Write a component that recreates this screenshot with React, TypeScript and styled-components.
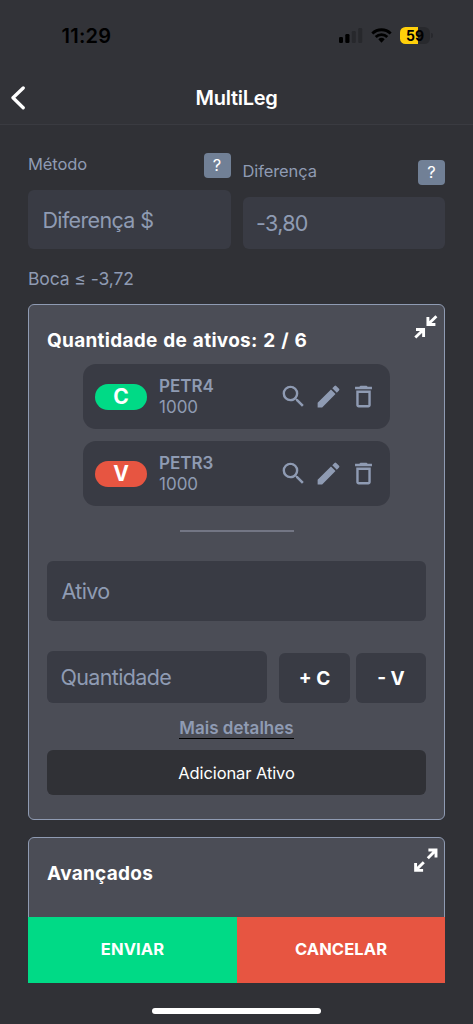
import React from "react";
import styled, { createGlobalStyle } from "styled-components";
import { MdDeleteOutline, MdEdit, MdSearch } from "react-icons/md";

const colors = {
  header: "#323338",
  page: "#303136",
  panel: "#4b4d56",
  field: "#393b44",
  muted: "#8f9bb3",
  green: "#00da86",
  red: "#e75541",
};

const GlobalStyle = createGlobalStyle`
  * { box-sizing: border-box; }
  body { margin: 0; background: ${colors.page}; }
  button { border: 0; margin: 0; padding: 0; font: inherit; color: inherit; background: none; }
`;

const Screen = styled.div`
  width: 473px;
  height: 1024px;
  overflow: hidden;
  display: flex;
  flex-direction: column;
  background: ${colors.page};
  font-family: Inter, "Liberation Sans", sans-serif;
  color: #fff;
`;

const StatusBar = styled.div`
  height: 71px;
  flex: none;
  display: flex;
  justify-content: space-between;
  padding: 23px 40px 0 61.5px;
  background: ${colors.header};
  color: #000;
`;

const Clock = styled.span`
  padding-top: 1px;
  font-size: 20px;
  line-height: 25px;
  font-weight: 600;
  letter-spacing: 0.25px;
`;

const StatusIcons = styled.div`
  display: flex;
  align-items: flex-start;
  gap: 8px;
  padding-top: 4px;
`;

const Battery = styled.div`
  display: flex;
  align-items: center;
  gap: 1px;
  &::after {
    content: "";
    width: 2px;
    height: 5px;
    border-radius: 0 2px 2px 0;
    background: #28292d;
  }
`;

const BatteryLevel = styled.div`
  width: 30px;
  height: 17px;
  border-radius: 5.5px;
  background: linear-gradient(90deg, #ffd00a 60%, #28292d 60%);
  font-size: 14px;
  line-height: 17px;
  font-weight: 700;
  text-align: center;
`;

const Header = styled.header`
  height: 54px;
  flex: none;
  display: grid;
  grid-template-columns: 60px 1fr 60px;
  align-items: center;
  background: ${colors.header};
  border-bottom: 1px solid #3a3b41;
`;

const BackButton = styled.button`
  display: flex;
  padding-left: 10px;
`;

const Title = styled.h1`
  margin: 0;
  text-align: center;
  font-size: 20px;
  line-height: 26px;
  font-weight: 600;
  letter-spacing: -0.3px;
`;

const Content = styled.main`
  height: 792px;
  flex: none;
  overflow: hidden;
  padding: 0 28px;
`;

const FieldPair = styled.div`
  display: flex;
  gap: 12px;
  height: 124px;
  align-items: flex-end;
`;

const FieldGroup = styled.div`
  flex: 1;
`;

const FieldTop = styled.div`
  display: flex;
  justify-content: space-between;
  height: 25px;
  margin-bottom: 12px;
`;

const Label = styled.label`
  font-size: 16.5px;
  line-height: 22px;
  letter-spacing: -0.1px;
  color: ${colors.muted};
`;

const HelpButton = styled.button`
  width: 27px;
  height: 25px;
  border-radius: 4px;
  background: #718096;
  font-size: 16.5px;
  line-height: 25px;
  text-align: center;
`;

const Field = styled.div<{ $height: number; $width?: string; $pad?: number }>`
  width: ${(p) => p.$width ?? "100%"};
  height: ${(p) => p.$height}px;
  display: flex;
  align-items: center;
  padding-left: ${(p) => p.$pad ?? 14.5}px;
  border-radius: 6px;
  background: ${colors.field};
  color: ${colors.muted};
  font-size: 21.5px;
  line-height: 28px;
  letter-spacing: -0.65px;
`;

const Limit = styled.p`
  margin: 19px 0 14px;
  height: 22px;
  color: ${colors.muted};
  font-size: 17.5px;
  line-height: 22px;
  letter-spacing: -0.1px;
`;

const Panel = styled.section<{ $height: number }>`
  position: relative;
  height: ${(p) => p.$height}px;
  margin-bottom: 17px;
  padding: 23px 18px 0;
  border: 1px solid ${colors.muted};
  border-radius: 6px;
  background: ${colors.panel};
`;

const PanelTitle = styled.h2`
  margin: 0;
  height: 26px;
  font-size: 19px;
  line-height: 26px;
  font-weight: 700;
  letter-spacing: 0.28px;
  word-spacing: 0.9px;
  white-space: nowrap;
`;

const PanelToggle = styled.button`
  position: absolute;
  top: 10px;
  right: 6px;
  display: flex;
`;

const AssetList = styled.div`
  display: flex;
  flex-direction: column;
  gap: 12px;
  width: 307px;
  margin: 10px auto 0 36px;
`;

const AssetRow = styled.div`
  height: 65px;
  display: flex;
  align-items: center;
  padding: 0 12px;
  border-radius: 13px;
  background: ${colors.field};
`;

const SideBadge = styled.span<{ $color: string }>`
  width: 52px;
  height: 26px;
  border-radius: 13px;
  background: ${(p) => p.$color};
  font-size: 21px;
  line-height: 26px;
  font-weight: 700;
  text-align: center;
`;

const AssetText = styled.div`
  flex: 1;
  padding-left: 12px;
  color: ${colors.muted};
  font-size: 17px;
  line-height: 20.5px;
`;

const Ticker = styled.div`
  font-weight: 600;
`;

const AssetActions = styled.div`
  display: flex;
  gap: 6px;
  color: ${colors.muted};
`;

const Divider = styled.hr`
  width: 114px;
  height: 2px;
  margin: 24px auto 29px;
  border: 0;
  background: #737684;
`;

const QuantityRow = styled.div`
  display: flex;
  align-items: flex-end;
  margin-top: 30px;
`;

const SideButton = styled.button<{ $left: number }>`
  width: ${(p) => (p.$left > 10 ? 71 : 70)}px;
  height: 50px;
  margin-left: ${(p) => p.$left}px;
  border-radius: 6px;
  background: ${colors.field};
  font-size: 19px;
  font-weight: 700;
`;

const DetailsLink = styled.div`
  width: max-content;
  margin: 15px auto 11px;
  border-bottom: 1.5px solid #000;
  color: ${colors.muted};
  font-size: 17px;
  line-height: 20px;
  font-weight: 600;
`;

const AddButton = styled.button`
  display: block;
  width: 100%;
  height: 45px;
  border-radius: 6px;
  background: ${colors.page};
  font-size: 16.5px;
  letter-spacing: -0.1px;
`;

const Actions = styled.div`
  display: flex;
  flex: none;
  height: 66px;
  padding: 0 28px;
`;

const ActionButton = styled.button<{ $color: string; $width: number }>`
  width: ${(p) => p.$width}px;
  padding-bottom: 2px;
  background: ${(p) => p.$color};
  font-size: 16.5px;
  font-weight: 700;
  letter-spacing: 0.1px;
`;

const HomeIndicator = styled.div`
  width: 169px;
  height: 6px;
  margin: 25px auto 0;
  border-radius: 3px;
  background: #fff;
`;

const SignalIcon = () => (
  <svg width="24" height="17" viewBox="0 0 24 17">
    <rect x="0" y="10" width="4" height="6" rx="1.3" />
    <rect x="6.3" y="7" width="4.2" height="9" rx="1.3" />
    <rect x="12.8" y="4" width="4" height="12" rx="1.3" fill="#27282c" />
    <rect x="19.2" y="1" width="4" height="15" rx="1.3" fill="#27282c" />
  </svg>
);

const WifiIcon = () => (
  <svg width="21" height="17" viewBox="0 0 21 17" fill="none" stroke="#000" strokeWidth="2.8">
    <path d="M1.3 6.5a13.2 13.2 0 0 1 18.4 0" />
    <path d="M4.7 10a8.3 8.3 0 0 1 11.6 0" />
    <path d="M7.3 12.2a4.7 4.7 0 0 1 6.4 0l-3.2 3.5z" fill="#000" stroke="none" />
  </svg>
);

const CollapseIcon = () => (
  <svg width="24" height="24" viewBox="0 0 24 24" fill="none" stroke="#fff" strokeWidth="2.9">
    <path d="M13.9 2v7.5h7.5M13.9 9.5l8.5-8.3M2 14.5h7.6v7.5M9.6 14.5l-8.3 8" />
  </svg>
);

const ExpandIcon = () => (
  <svg width="24" height="24" viewBox="0 0 24 24" fill="none" stroke="#fff" strokeWidth="2.9">
    <path d="M14.4 2h7.6v7.5M22 2l-8.2 8.2M1.6 15v7.4h7.5M1.6 22.4l8.2-8.2" />
  </svg>
);

type Asset = { side: "C" | "V"; ticker: string; quantity: number };

const assets: Asset[] = [
  { side: "C", ticker: "PETR4", quantity: 1000 },
  { side: "V", ticker: "PETR3", quantity: 1000 },
];

export default function App() {
  return (
    <>
      <GlobalStyle />
      <Screen>
        <StatusBar>
          <Clock>11:29</Clock>
          <StatusIcons>
            <SignalIcon />
            <WifiIcon />
            <Battery>
              <BatteryLevel>59</BatteryLevel>
            </Battery>
          </StatusIcons>
        </StatusBar>
        <Header>
          <BackButton aria-label="Voltar">
            <svg width="16" height="24" viewBox="0 0 16 24" fill="none" stroke="#fff" strokeWidth="3.3" strokeLinecap="round" strokeLinejoin="round">
              <path d="M13.2 2L3 11.8l10.2 10" />
            </svg>
          </BackButton>
          <Title>MultiLeg</Title>
        </Header>
        <Content>
          <FieldPair>
            <FieldGroup>
              <FieldTop>
                <Label>Método</Label>
                <HelpButton>?</HelpButton>
              </FieldTop>
              <Field $height={59}>Diferença $</Field>
            </FieldGroup>
            <FieldGroup>
              <FieldTop>
                <Label>Diferença</Label>
                <HelpButton>?</HelpButton>
              </FieldTop>
              <Field $height={52} $pad={13.5}>-3,80</Field>
            </FieldGroup>
          </FieldPair>
          <Limit>Boca ≤ -3,72</Limit>
          <Panel $height={516}>
            <PanelTitle>Quantidade de ativos: 2 / 6</PanelTitle>
            <PanelToggle aria-label="Recolher">
              <CollapseIcon />
            </PanelToggle>
            <AssetList>
              {assets.map((asset) => (
                <AssetRow key={asset.ticker}>
                  <SideBadge $color={asset.side === "C" ? colors.green : colors.red}>{asset.side}</SideBadge>
                  <AssetText>
                    <Ticker>{asset.ticker}</Ticker>
                    <div>{asset.quantity}</div>
                  </AssetText>
                  <AssetActions>
                    <MdSearch size={29} />
                    <MdEdit size={29} />
                    <MdDeleteOutline size={29} />
                  </AssetActions>
                </AssetRow>
              ))}
            </AssetList>
            <Divider />
            <Field $height={60}>Ativo</Field>
            <QuantityRow>
              <Field $height={52} $width="220px" $pad={13.5}>Quantidade</Field>
              <SideButton $left={12}>+ C</SideButton>
              <SideButton $left={6}>- V</SideButton>
            </QuantityRow>
            <DetailsLink>Mais detalhes</DetailsLink>
            <AddButton>Adicionar Ativo</AddButton>
          </Panel>
          <Panel $height={120}>
            <PanelTitle>Avançados</PanelTitle>
            <PanelToggle aria-label="Expandir">
              <ExpandIcon />
            </PanelToggle>
          </Panel>
        </Content>
        <Actions>
          <ActionButton $color={colors.green} $width={209}>ENVIAR</ActionButton>
          <ActionButton $color={colors.red} $width={208}>CANCELAR</ActionButton>
        </Actions>
        <HomeIndicator />
      </Screen>
    </>
  );
}
